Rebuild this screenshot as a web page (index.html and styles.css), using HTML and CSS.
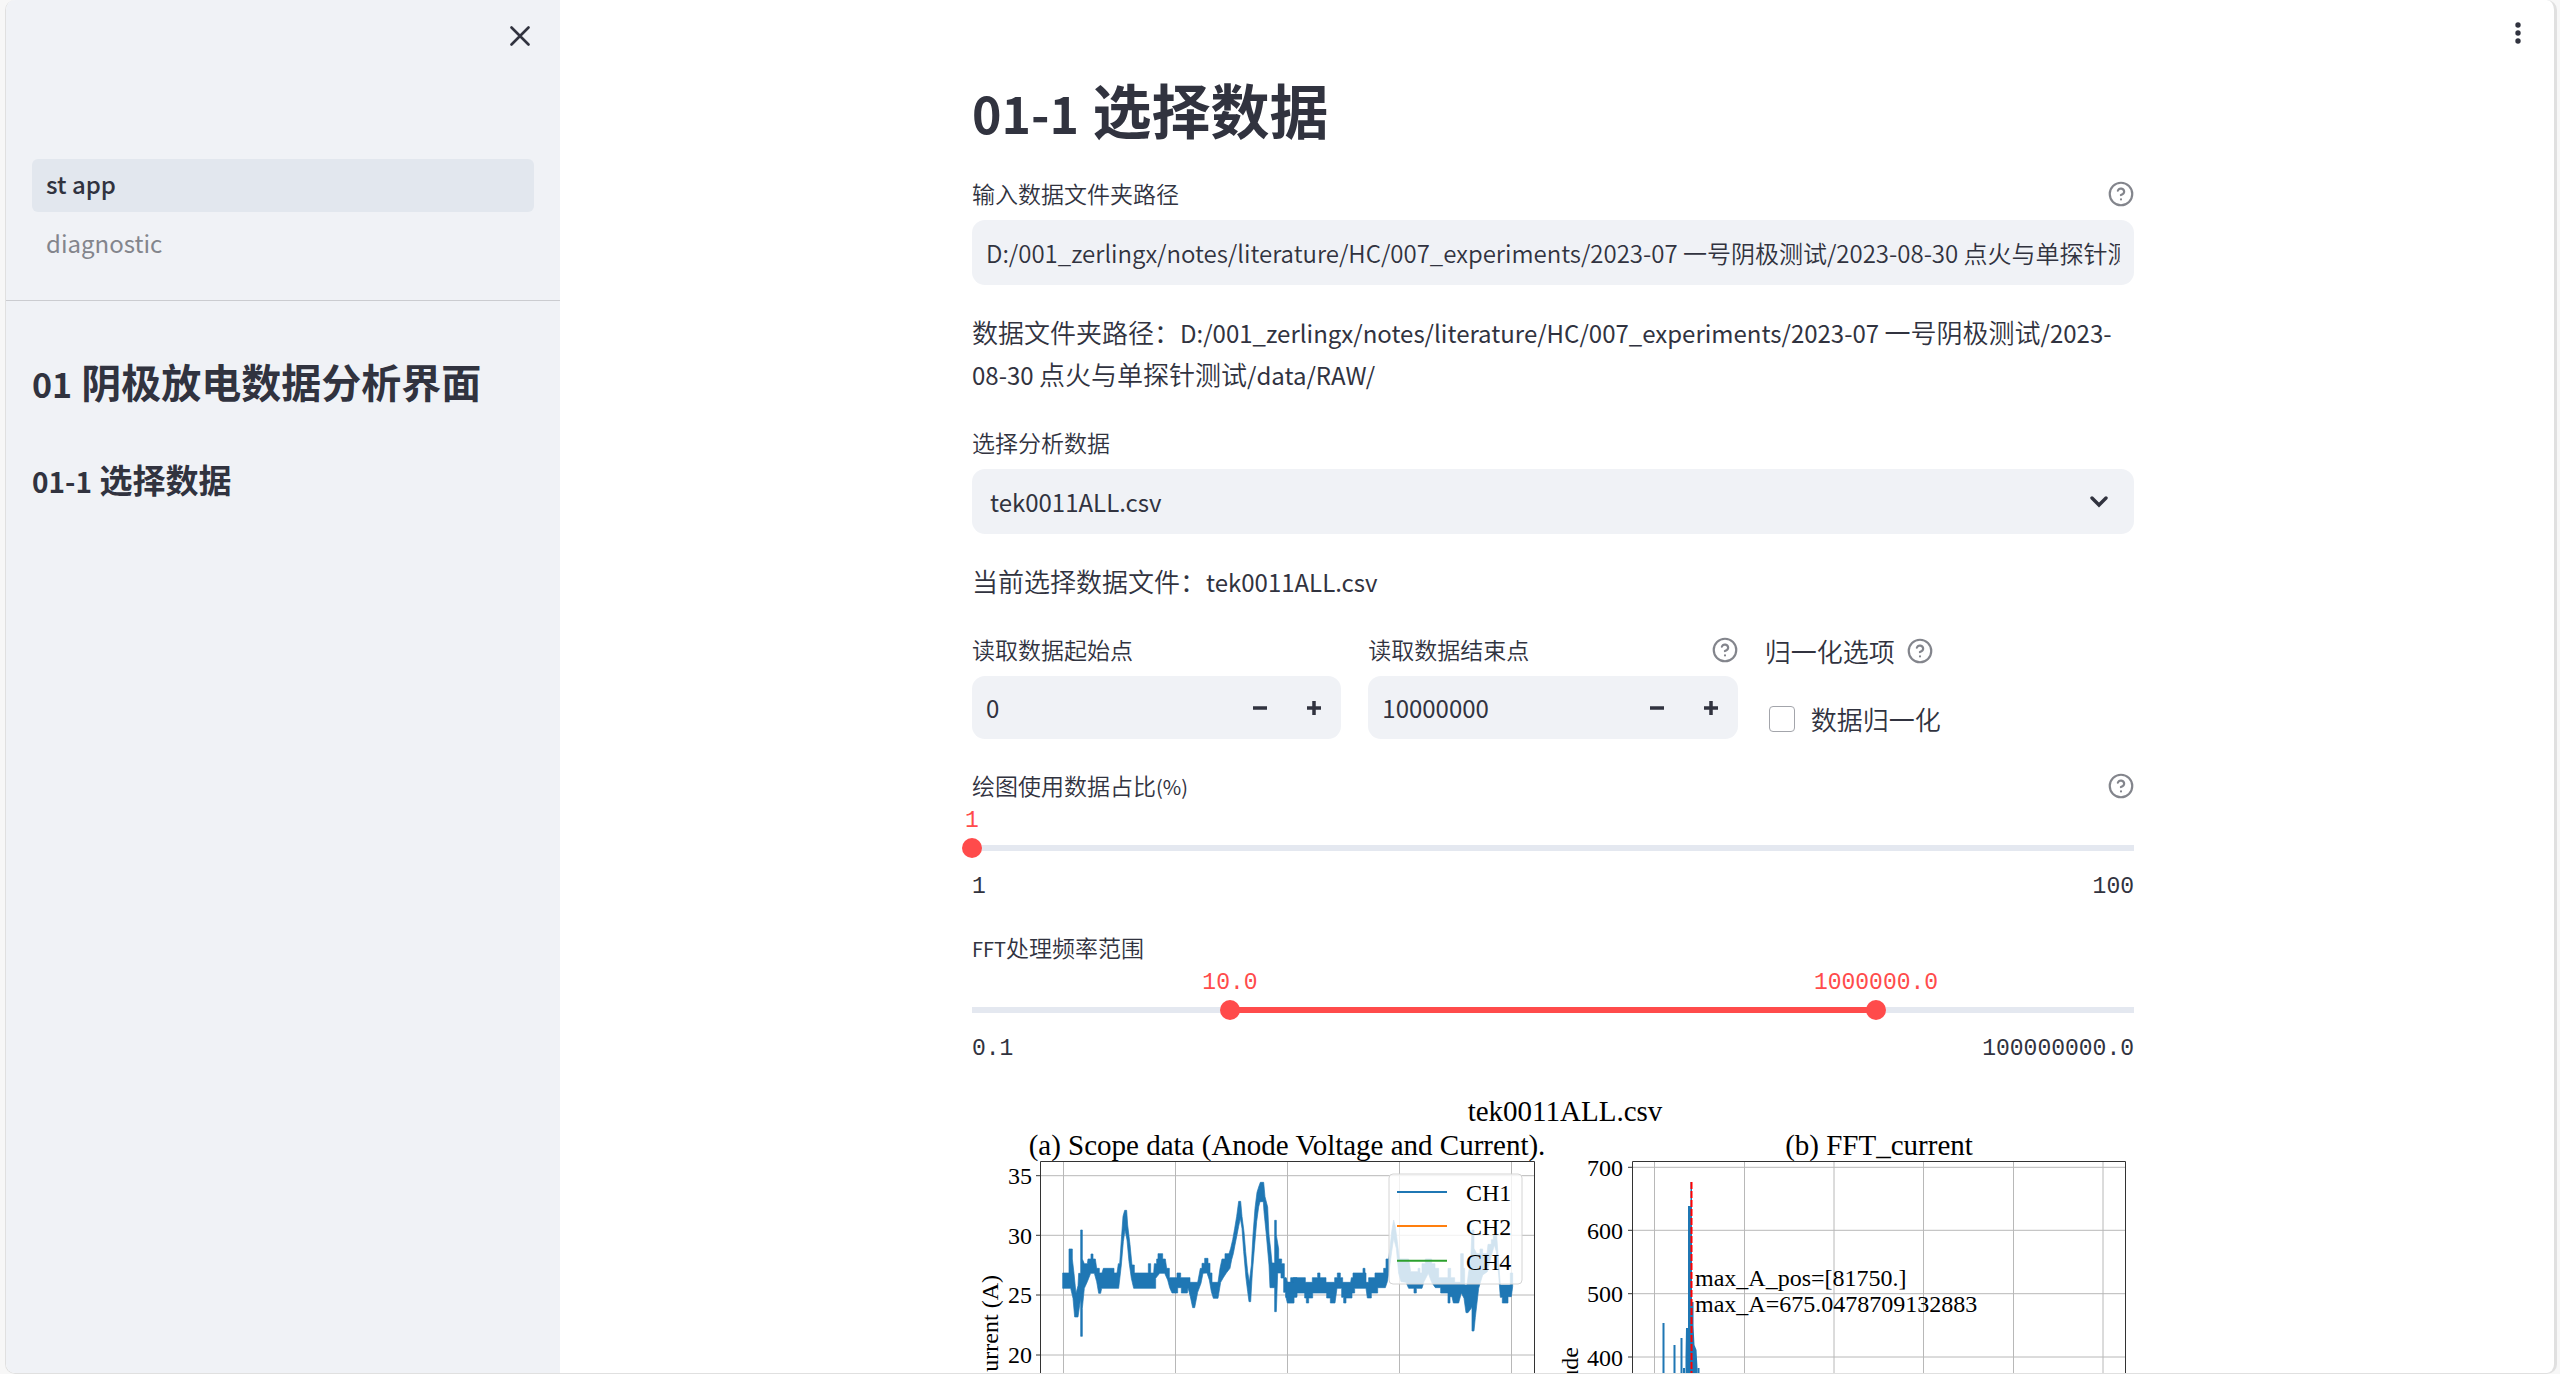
FILE: index.html
```html
<!DOCTYPE html>
<html lang="zh-CN">
<head>
<meta charset="utf-8">
<title>st app</title>
<link rel="stylesheet" href="styles.css">
</head>
<body>
<svg class="sprite" aria-hidden="true">
  <symbol id="help" viewBox="0 0 24 24"><g fill="none" stroke="currentColor" stroke-width="2" stroke-linecap="round" stroke-linejoin="round"><circle cx="12" cy="12" r="10.4"/><path d="M9.09 9a3 3 0 0 1 5.83 1c0 2-3 3-3 3M12 17h.01"/></g></symbol>
  <symbol id="minus" viewBox="0 0 8 8"><path fill="currentColor" d="M0 3v2h8V3H0z"/></symbol>
  <symbol id="plus" viewBox="0 0 8 8"><path fill="currentColor" d="M3 0v3H0v2h3v3h2V5h3V3H5V0H3z"/></symbol>
</svg>
<div class="app">
  <aside class="sidebar">
    <button class="icon-button close" aria-label="关闭"><svg viewBox="0 0 20 20" width="20" height="20"><path d="M1.5 1.5l17 17M18.500 1.500l-17 17" fill="none" stroke="currentColor" stroke-width="2.600" stroke-linecap="round"/></svg></button>
    <nav class="nav">
      <a class="nav-link current" href="#app">st app</a>
      <a class="nav-link" href="#diagnostic">diagnostic</a>
    </nav>
    <div class="sidebar-body">
      <h2><span class="latin">01</span> 阴极放电数据分析界面</h2>
      <h3><span class="latin">01-1</span> 选择数据</h3>
    </div>
  </aside>
  <main class="main">
    <button class="icon-button menu" aria-label="菜单"><svg viewBox="0 0 8 24" width="8" height="24" fill="currentColor"><circle cx="4" cy="4" r="2.700"/><circle cx="4" cy="12" r="2.700"/><circle cx="4" cy="20" r="2.700"/></svg></button>
    <div class="column">
      <h1><span class="latin">01-1</span> 选择数据</h1>

      <div class="field">
        <div class="label-row"><label for="folder">输入数据文件夹路径</label><svg class="help"><use href="#help"/></svg></div>
        <input id="folder" class="control text" type="text" value="D:/001_zerlingx/notes/literature/HC/007_experiments/2023-07 一号阴极测试/2023-08-30 点火与单探针测试/data/RAW/">
      </div>

      <p>数据文件夹路径：<span class="latin">D:/001_zerlingx/notes/literature/HC/007_experiments/2023-07 </span>一号阴极测试<span class="latin">/2023-<wbr><span class="keep">08-30</span> </span>点火与单探针测试<span class="latin">/data/RAW/</span></p>

      <div class="field">
        <div class="label-row"><label for="file">选择分析数据</label></div>
        <div class="select-wrap">
          <select id="file" class="control select"><option>tek0011ALL.csv</option></select>
          <svg class="chevron" viewBox="0 0 18 12"><path d="M2 2l7 7 7-7" fill="none" stroke="currentColor" stroke-width="3.400" stroke-linecap="round"/></svg>
        </div>
      </div>

      <p>当前选择数据文件：<span class="latin">tek0011ALL.csv</span></p>

      <div class="columns">
        <div class="field">
          <div class="label-row"><label for="start">读取数据起始点</label></div>
          <div class="control number">
            <input id="start" type="number" value="0">
            <button aria-label="减少"><svg><use href="#minus"/></svg></button>
            <button aria-label="增加"><svg><use href="#plus"/></svg></button>
          </div>
        </div>
        <div class="field">
          <div class="label-row"><label for="end">读取数据结束点</label><svg class="help"><use href="#help"/></svg></div>
          <div class="control number">
            <input id="end" type="number" value="10000000">
            <button aria-label="减少"><svg><use href="#minus"/></svg></button>
            <button aria-label="增加"><svg><use href="#plus"/></svg></button>
          </div>
        </div>
        <div class="options">
          <div class="option-title">归一化选项<svg class="help"><use href="#help"/></svg></div>
          <label class="check"><input type="checkbox">数据归一化</label>
        </div>
      </div>

      <div class="field">
        <div class="label-row"><label for="ratio">绘图使用数据占比<span class="latin">(%)</span></label><svg class="help"><use href="#help"/></svg></div>
        <div class="slider">
          <output style="left:0%">1</output>
          <div class="rail"><input id="ratio" type="range" min="1" max="100" value="1"></div>
          <div class="limits"><span>1</span><span>100</span></div>
        </div>
      </div>

      <div class="field">
        <div class="label-row"><label for="low"><span class="latin">FFT</span>处理频率范围</label></div>
        <div class="slider">
          <output style="left:22.2%">10.0</output>
          <output style="left:77.8%">1000000.0</output>
          <div class="rail">
            <div class="fill" style="left:22.2%;right:22.2%"></div>
            <input id="low" type="range" min="0" max="9" value="2">
            <input type="range" min="0" max="9" value="7" aria-label="上限">
          </div>
          <div class="limits"><span>0.1</span><span>100000000.0</span></div>
        </div>
      </div>

      <svg class="figure" viewBox="0 0 1162 560" role="img" aria-label="tek0011ALL.csv">
        <g transform="translate(-972 -1090)">
          <text class="title" x="1565" y="1121">tek0011ALL.csv</text>
          <text class="title" x="1287" y="1155">(a) Scope data (Anode Voltage and Current).</text>
          <text class="title" x="1879" y="1155">(b) FFT_current</text>

          <path class="grid" d="M1063.500 1161v450M1175.500 1161v450M1287.500 1161v450M1399.500 1161v450M1511.500 1161v450M1040 1175.700h494M1040 1235.300h494M1040 1295h494M1040 1355h494"/>
          <g transform="translate(1056 1165) scale(0.33333)">
            <path class="wave" d="M20 324H39V252H49V282L54 325 60 385 66 362 68 325H74V195H79V282L85 296H94L96 282H105V267H111V282H118L122 310H130V324H138L142 310H174V324H183L187 296H191L196 224 201 154 206 136H212L215 180 222 238 228 300H235V324H250L252 324H277V296H284V324H293L295 296H302V282H306V266H320V282H328L332 310H340V338H363V324H374V338H402V352H425L433 310H438V295H446V280H456V295H462V324H468V352H486L492 310 498 282H507V266H519L524 250 530 224 536 190 542 154 548 109H554L558 154 564 200 569 260 575 320 580 352 586 300 591 210 597 130 603 82 608 66 613 52H623L627 95 635 126 639 210 644 252 648 294H656V166H661V210L668 252V282H677V296H685V338H690V352H704V338H723V395H713V413H695V397H689V382H683V339H675V324H665L661 440H656V368H642L639 300 631 210 624 140 622 110H612L608 126 602 170 596 240 589 324 584 410H579L575 380 570 340 563 260 558 190 553 160 548 184 543 210 537 240 532 266 527 284 522 310 511 324 502 338 494 352 486 400H472L466 380 460 345 453 324 441 325 435 355 425 382 416 428H410L403 395 396 368 394 384H376V368H365V384H348L341 368 335 345 326 325H311L299 340V370H233L226 340 219 290 213 225 207 195 202 230 196 300 188 370H137L134 385H128L122 350 115 325H104L94 350 85 370 79 430V514H74V400L66 456H56L51 400 44 370H20z"/>
          </g>
          <g transform="translate(1286 1165) scale(0.33333)">
            <path class="wave" d="M0 338L4 352H22V338H58V352H79V338H95V324H102V338H120V352H146V338H154V324H163V338H170V352H194L196 338H201V324H231V310H237V324H240V352H248V338H267V324H293V310H300V282H308L312 250 317 200 323 165 328 185 334 230 340 282H354V282H368L374 320H396V310H402V324H408V296H418V282H437V296H447V310H458V338H486V310H494V338H506V352H524V266H532V310H536V360H543L548 320 554 290 558 195H564V250L572 266H582V252H590V266H603L606 238H616V224H622V210H632L637 282 643 360H673V324H680V365L676 395H666V414H649V397H643L638 330 631 260 625 240 614 280 604 320 590 330 578 370 568 457 564 498H558V427L546 443H540L534 400 526 384 518 414H502L498 395H492V414H486V384H464V368H448L437 352 427 325 414 350 408 370H391V384H384V370H368L360 352 345 350 338 325 331 250 323 220 317 260 309 320 304 350 298 368H275V384H256V399H244L240 370H206V384H198V399H180V414H173V397H167V370H153L147 414H133V399H122V384H80V399H68V414H61V399H56V384H32V397H24V414H4L0 397z"/>
          </g>
          <path class="axis" d="M1040.500 1611V1161.500H1534.500V1611M1036 1175.700h4M1036 1235.300h4M1036 1295h4M1036 1355h4"/>
          <g class="tick"><text x="1032" y="1184">35</text><text x="1032" y="1244">30</text><text x="1032" y="1303">25</text><text x="1032" y="1363">20</text></g>
          <text class="tick" transform="translate(998 1275) rotate(-90)">Current (A)</text>

          <rect class="legend" x="1389" y="1174" width="133" height="110" rx="4"/>
          <path d="M1397 1192h50" stroke="#1f77b4" stroke-width="2"/>
          <path d="M1397 1226h50" stroke="#ff7f0e" stroke-width="2"/>
          <path d="M1397 1260.700h50" stroke="#2ca02c" stroke-width="2"/>
          <text class="note" x="1466" y="1201">CH1</text><text class="note" x="1466" y="1235">CH2</text><text class="note" x="1466" y="1270">CH4</text>

          <path class="grid" d="M1654.500 1161v450M1744.500 1161v450M1834 1161v450M1923.500 1161v450M2013.500 1161v450M2103 1161v450M1632 1167.300h493M1632 1230.300h493M1632 1293.700h493M1632 1357h493"/>
          <path d="M1663.500 1611V1323M1674.500 1611V1345M1681.500 1611V1338M1684 1611V1368M1698.500 1611V1368" stroke="#1f77b4" stroke-width="2" fill="none"/>
          <path class="spectrum" d="M1685.500 1611V1357L1686 1328H1688V1206H1690.500V1182H1692V1302H1693.500V1326L1694.500 1345 1696.500 1350 1697.500 1368V1611z"/>
          <path d="M1691.500 1182V1611" stroke="red" stroke-width="2" stroke-dasharray="7 2"/>
          <path class="axis" d="M1632.500 1611V1161.500H2125.500V1611M1628 1167.300h4M1628 1230.300h4M1628 1293.700h4M1628 1357h4"/>
          <g class="tick"><text x="1623" y="1176">700</text><text x="1623" y="1239">600</text><text x="1623" y="1302">500</text><text x="1623" y="1366">400</text></g>
          <text class="tick" transform="translate(1578 1347) rotate(-90)">Amplitude</text>
          <text class="note" x="1695" y="1286">max_A_pos=[81750.]</text>
          <text class="note" x="1695" y="1312">max_A=675.0478709132883</text>
        </g>
      </svg>
    </div>
  </main>
</div>
</body>
</html>
```
FILE: styles.css
```css
* { box-sizing: border-box; }

body {
  margin: 0;
  background: #f7f7f7;
  color: #31333f;
  font: 350 26px/42px "Noto Sans CJK SC", sans-serif;
}

button, input, select { font: inherit; color: inherit; }
button { border: 0; padding: 0; background: none; cursor: pointer; }
h1, h2, h3, p { margin: 0; }

.sprite { display: none; }

/* window frame */
.app {
  display: grid;
  grid-template-columns: 554px 1fr;
  height: 100vh;
  margin: 0 3px 0 5px;
  overflow: hidden;
  background: #fff;
  border: solid #e0e0e0;
  border-width: 0 3px 1px 1px;
  border-radius: 10px;
}

/* Latin runs are set a little smaller so they sit evenly beside the Han text */
.latin { font-size: 24px; line-height: 1; font-weight: 400; }
.keep { white-space: nowrap; }

/* sidebar */
.sidebar {
  display: flex;
  flex-direction: column;
  background: #f0f2f6;
}
.icon-button { display: grid; place-items: center; width: 40px; height: 40px; }
.close { align-self: flex-end; margin: 16px 20px 103px 0; }
.nav {
  display: grid;
  gap: 6px;
  padding: 0 26px 29px;
  border-bottom: 1px solid #cbccd0;
}
.nav-link {
  padding: 4px 14px;
  height: 53px;
  border-radius: 6px;
  color: #83858c;
  font-size: 24px;
  font-weight: 400;
  text-decoration: none;
}
.nav-link.current { background: #e2e7ee; color: #31333f; font-weight: 500; }
.sidebar-body { display: grid; gap: 45px; padding: 51px 26px; }
h2 { font-size: 40px; line-height: 58px; }
h2 .latin { font-size: 34px; font-weight: 700; }
h3 { font-size: 33px; line-height: 48px; }
h3 .latin { font-size: 28px; font-weight: 700; }

/* main */
.main { position: relative; padding: 0 8px 0 0; }
.menu { position: absolute; top: 13px; right: 16px; }
.column {
  display: flex;
  flex-direction: column;
  gap: 26px;
  width: 100%;
  max-width: 1162px;
  margin: 0 auto;
  padding-top: 71px;
}
h1 { padding-bottom: 2px; font-size: 59px; line-height: 75px; }
h1 .latin { font-size: 50px; font-weight: 700; }
p { padding-bottom: 2px; }

.label-row {
  display: flex;
  align-items: center;
  justify-content: space-between;
  height: 39px;
  margin-bottom: 7px;
  font-size: 23px;
  line-height: 39px;
}
.label-row .latin { font-size: 20px; }
.help { width: 26px; height: 26px; flex: none; color: #83858c; }

.control {
  display: block;
  width: 100%;
  height: 65px;
  border: 0;
  border-radius: 13px;
  background: #f0f2f6;
}
.text { padding: 0 14px; font-size: 24px; }
.select-wrap { position: relative; }
.select { appearance: none; padding: 0 18px; font-size: 24px; font-weight: 400; }
.chevron {
  position: absolute;
  top: 27px;
  right: 26px;
  width: 18px;
  height: 12px;
  pointer-events: none;
}

.columns { display: grid; grid-template-columns: repeat(3, 1fr); gap: 27px; }
.number {
  display: grid;
  grid-template-columns: 1fr 54px 54px;
  align-items: center;
  height: 63px;
}
.number input {
  width: 100%;
  height: 63px;
  padding: 0 14px;
  border: 0;
  background: none;
  font-size: 24px;
  font-weight: 400;
  appearance: textfield;
}
.number input::-webkit-inner-spin-button { appearance: none; margin: 0; }
.number button { display: grid; place-items: center; height: 63px; }
.number svg { width: 14px; height: 14px; }
.option-title { display: flex; align-items: center; gap: 12px; height: 42px; }
.check { display: flex; align-items: center; gap: 16px; margin-top: 26px; }
.check input {
  appearance: none;
  width: 26px;
  height: 26px;
  margin: 0 0 0 4px;
  border: 1px solid #a3a5ab;
  border-radius: 4px;
  background: #fff;
}

/* sliders */
.slider {
  position: relative;
  padding-top: 26px;
  font: 23px/28px "Liberation Mono", monospace;
}
.slider output {
  position: absolute;
  top: -5px;
  color: #ff4b4b;
  transform: translateX(-50%);
}
.rail {
  position: relative;
  height: 20px;
  background: linear-gradient(#e4e8f0, #e4e8f0) center / 100% 6px no-repeat;
}
.fill { position: absolute; top: 7px; height: 6px; background: #ff4b4b; }
.rail input {
  position: absolute;
  top: 0;
  left: -10px;
  width: calc(100% + 20px);
  height: 20px;
  margin: 0;
  appearance: none;
  background: none;
  pointer-events: none;
}
.rail input::-webkit-slider-thumb {
  appearance: none;
  width: 20px;
  height: 20px;
  border-radius: 50%;
  background: #ff4b4b;
  pointer-events: auto;
}
.limits {
  display: flex;
  justify-content: space-between;
  padding-top: 15px;
  margin-bottom: 1px;
}

/* plots */
.figure { display: block; width: 100%; font-family: "Liberation Serif", serif; font-weight: 400; fill: #000; }
.title { font-size: 29px; text-anchor: middle; }
.tick { font-size: 24px; text-anchor: end; }
.note { font-size: 24px; }
.grid { stroke: #b8b8b8; stroke-width: 1; fill: none; }
.axis { stroke: #333; stroke-width: 1; fill: none; }
.wave { fill: #1f77b4; stroke: #1f77b4; stroke-width: 2; }
.spectrum { fill: #1f77b4; }
.legend { fill: #fff; fill-opacity: 0.8; stroke: #d4d4d4; }
```
